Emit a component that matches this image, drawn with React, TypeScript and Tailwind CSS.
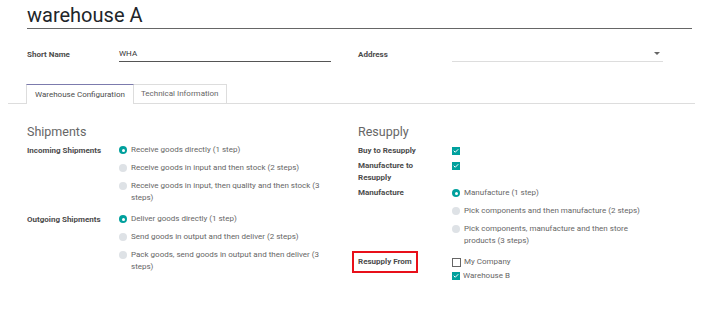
import { Check } from "lucide-react";

function Radio({ checked }: { checked?: boolean }) {
  if (checked) {
    return (
      <span className="mt-[2px] flex h-[8px] w-[8px] shrink-0 items-center justify-center rounded-full bg-[#00a09d]">
        <span className="h-[3px] w-[3px] rounded-full bg-white" />
      </span>
    );
  }
  return <span className="mt-[2px] h-[8px] w-[8px] shrink-0 rounded-full bg-[#dee2e6]" />;
}

function Box({ checked }: { checked?: boolean }) {
  if (checked) {
    return (
      <span className="flex h-[8px] w-[8px] shrink-0 items-center justify-center bg-[#00a09d]">
        <Check className="h-[6px] w-[6px] text-white" strokeWidth={4} />
      </span>
    );
  }
  return <span className="h-[9px] w-[9px] shrink-0 border border-[#666] bg-white" />;
}

function RadioList({ items, checked = 0, className = "" }: { items: string[]; checked?: number; className?: string }) {
  return (
    <div className={`flex flex-col gap-[6px] ${className}`}>
      {items.map((t, i) => (
        <div key={t} className="flex gap-[4px] leading-[12px] text-[#666]">
          <Radio checked={i === checked} />
          <span>{t}</span>
        </div>
      ))}
    </div>
  );
}

export default function App() {
  return (
    <div className="h-[320px] w-[703px] bg-white font-['Roboto',sans-serif] text-[8px] text-[#4c4c4c]">
      {/* Title */}
      <div className="pl-[27px] pr-[11px] pt-[2px]">
        <h1 className="h-[27px] border-b border-[#666] text-[20px] leading-[26px] text-[#212529]">warehouse A</h1>
      </div>

      {/* Short name / address */}
      <div className="mt-[18px] flex gap-[27px] pl-[27px]">
        <div className="grid w-[304px] grid-cols-[92px_1fr] items-center">
          <span className="font-bold text-[#4c4c4c]">Short Name</span>
          <span className="h-[15px] border-b border-[#555] pt-[1px] leading-[12px] text-[#333]">WHA</span>
        </div>
        <div className="grid w-[305px] grid-cols-[94px_1fr] items-center">
          <span className="font-bold text-[#4c4c4c]">Address</span>
          <span className="relative h-[14px] border-b border-[#ddd]">
            <span className="absolute right-[3px] top-[4px] h-0 w-0 border-l-[3px] border-r-[3px] border-t-[3px] border-l-transparent border-r-transparent border-t-[#666]" />
          </span>
        </div>
      </div>

      {/* Tabs */}
      <div className="mx-[8px] mt-[22px] flex h-[20px] border-b border-[#ddd] pl-[18px]">
        <div className="-mb-px flex h-[20px] items-center border-x border-t border-[#ddd] border-t-[#7c7bad] bg-white px-[8px] text-[#4c4c4c]">
          Warehouse Configuration
        </div>
        <div className="flex h-[19px] items-center border-r border-t border-[#ddd] px-[7px] text-[#666]">
          Technical Information
        </div>
      </div>

      {/* Groups */}
      <div className="mt-[20px] flex gap-[27px] pl-[27px]">
        <div className="w-[304px]">
          <div className="text-[12.5px] leading-[16px] text-[#666]">Shipments</div>
          <div className="mt-[4px] grid grid-cols-[92px_1fr] gap-y-[9px]">
            <span className="mt-[1px] font-bold leading-[12px]">Incoming Shipments</span>
            <RadioList
              className="max-w-[206px]"
              items={[
                "Receive goods directly (1 step)",
                "Receive goods in input and then stock (2 steps)",
                "Receive goods in input, then quality and then stock (3 steps)",
              ]}
            />
            <span className="mt-[1px] font-bold leading-[12px]">Outgoing Shipments</span>
            <RadioList
              className="max-w-[206px]"
              items={[
                "Deliver goods directly (1 step)",
                "Send goods in output and then deliver (2 steps)",
                "Pack goods, send goods in output and then deliver (3 steps)",
              ]}
            />
          </div>
        </div>
        <div className="w-[305px]">
          <div className="text-[12.5px] leading-[16px] text-[#666]">Resupply</div>
          <div className="mt-[5px] grid grid-cols-[94px_1fr] gap-y-[3px]">
            <span className="font-bold leading-[12px]">Buy to Resupply</span>
            <div className="pt-[2px]"><Box checked /></div>
            <span className="max-w-[80px] font-bold leading-[12px]">Manufacture to Resupply</span>
            <div className="pt-[2px]"><Box checked /></div>
            <span className="font-bold leading-[12px]">Manufacture</span>
            <RadioList
              className="max-w-[196px]"
              items={[
                "Manufacture (1 step)",
                "Pick components and then manufacture (2 steps)",
                "Pick components, manufacture and then store products (3 steps)",
              ]}
            />
            <div className="relative mt-[6px]">
              <span className="font-bold leading-[12px]">Resupply From</span>
              <span className="absolute left-[-6px] top-[-5px] h-[22px] w-[66px] border-2 border-[#e8101a]" />
            </div>
            <div className="mt-[7px] flex flex-col gap-[4px] text-[#666]">
              <div className="flex items-center gap-[3px] leading-[10px]">
                <Box />
                <span>My Company</span>
              </div>
              <div className="flex items-center gap-[3px] leading-[10px]">
                <Box checked />
                <span>Warehouse B</span>
              </div>
            </div>
          </div>
        </div>
      </div>
    </div>
  );
}
